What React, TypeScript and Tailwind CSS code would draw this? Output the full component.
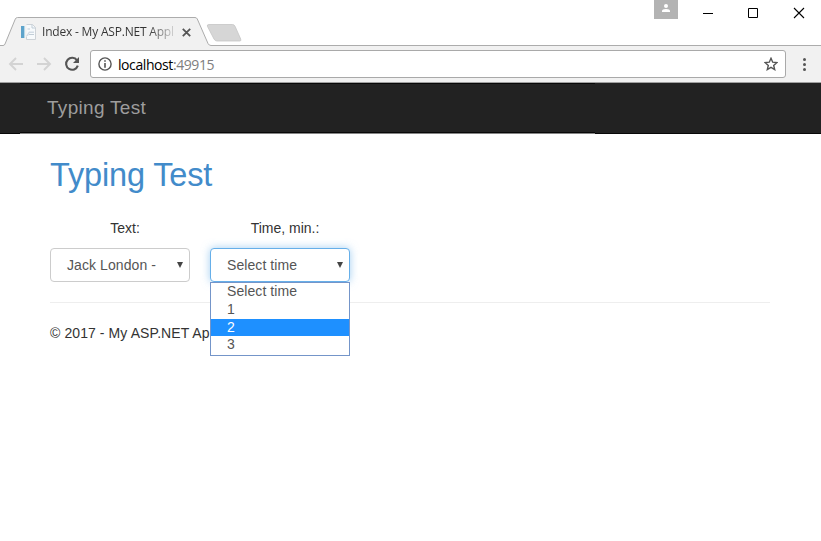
import type { ReactNode } from 'react';

function TitleBar() {
  return (
    <header className="relative flex h-[46px] items-start bg-white">
      <svg className="absolute inset-0" width="821" height="46" fill="none">
        <path d="M0 45.5H3Q4.5 45.5 5 44L15.3 19Q16 17.5 17.5 17.5H195Q196.6 17.5 197.3 19L208 43.5Q209 45.5 211 45.5H821V46H0Z" fill="#f1f1f1" />
        <path d="M0 45.5H3Q4.5 45.5 5 44L15.3 19Q16 17.5 17.5 17.5H195Q196.6 17.5 197.3 19L208 43.5Q209 45.5 211 45.5H821" stroke="#acacac" />
        <path d="M209 24.5H232.5Q234.2 24.5 235 26.2L240.7 39Q241.5 41 239.8 41H217Q215 41 214 39L207.4 26.3Q206.8 24.5 209 24.5Z" fill="#d6d6d6" stroke="#c5c5c5" strokeWidth=".8" />
      </svg>
      <div className="relative mt-[18px] ml-[21px] flex h-7 w-[173px] items-center">
        <svg width="16" height="16" viewBox="0 0 16 16" fill="none">
          <path d="M0 2H3V14H0Z" fill="#5da3cb" />
          <path d="M3 2H4V14H3Z" fill="#b7d8e8" />
          <path d="M5.5 .5H11.5L14.5 3.5V15.5H5.5V12.5" fill="#f7fafc" stroke="#cdd2d7" />
          <path d="M11 .5V4H14.5M6.5 5H9M8 10.5H13" stroke="#c1cdd7" />
          <path d="M5 12L8 7.5H13V9H8.5L7 12Z" fill="#d3dce5" />
        </svg>
        <div className="ml-[5px] w-[133px] bg-linear-to-r from-[#333] from-80% to-[#33333322] bg-clip-text font-['Open_Sans',sans-serif] text-[12px] tracking-[-0.2px] whitespace-nowrap text-transparent">
          Index - My ASP.NET Appl
        </div>
        <svg className="ml-[7px]" width="9" height="9" viewBox="0 0 9 9">
          <path d="M.8 .8L8.2 8.2M8.2 .8L.8 8.2" stroke="#555" strokeWidth="1.8" />
        </svg>
      </div>
      <div className="relative ml-auto flex h-[27px] w-[167px]">
        <div className="flex h-[19px] w-6 justify-center bg-[#b3b3b3]">
          <svg width="10" height="13" viewBox="0 0 10 13" fill="#fff">
            <circle cx="5" cy="6" r="2" />
            <path d="M1 12V11Q1 9 5 9T9 11V12Z" />
          </svg>
        </div>
        <svg width="143" height="27" fill="none" stroke="#000">
          <path d="M25 13.5H35M70.5 8.5H79.5V17.5H70.5Z" />
          <path d="M116 8L126 18M126 8L116 18" strokeWidth="1.1" />
        </svg>
      </div>
    </header>
  );
}

function Toolbar() {
  return (
    <div className="flex h-9 items-center bg-[#f1f1f1]">
      <svg className="shrink-0" width="90" height="36" fill="none">
        <path d="M23 18H10M16 12L10 18L16 24M37 18H50M44 12L50 18L44 24" stroke="#d3d3d3" strokeWidth="1.9" />
        <path d="M77 14.3A6 6 0 1 0 77.8 19.7" stroke="#555" strokeWidth="2.1" />
        <path d="M79 11V17H73Z" fill="#555" />
      </svg>
      <div className="flex h-7 w-[696px] shrink-0 items-center rounded-[3px] border border-[#a9a9a9] bg-white pr-[7px] pl-[7px]">
        <svg width="14" height="14" viewBox="0 0 14 14" fill="none" stroke="#555">
          <circle cx="7" cy="7" r="6.1" strokeWidth="1.4" />
          <path d="M7 6V10.7M7 3.2V4.8" strokeWidth="1.6" />
        </svg>
        <div className="ml-[6px] font-['Open_Sans',sans-serif] text-[14px] tracking-[-0.42px] text-black">
          localhost<span className="text-[#808080]">:49915</span>
        </div>
        <svg className="ml-auto" width="14" height="14" viewBox="0 0 14 14" fill="none">
          <path d="M7 1.3L8.7 5.2L12.9 5.6L9.7 8.4L10.7 12.6L7 10.4L3.3 12.6L4.3 8.4L1.1 5.6L5.3 5.2Z" stroke="#555" strokeWidth="1.4" />
        </svg>
      </div>
      <svg width="35" height="36" fill="#555">
        <circle cx="18.5" cy="13.5" r="1.5" />
        <circle cx="18.5" cy="18.5" r="1.5" />
        <circle cx="18.5" cy="23.5" r="1.5" />
      </svg>
    </div>
  );
}

function Field({ label, value, focused, children }: { label: string; value: string; focused?: boolean; children?: ReactNode }) {
  return (
    <div className="relative w-[140px]">
      <div className="h-5 pl-[10px] text-center leading-5">{label}</div>
      <div
        className={`mt-[10px] flex h-[34px] items-center justify-between rounded-[4px] border bg-white pr-[6px] pl-4 tracking-[0.08px] text-[#555] ${
          focused ? 'border-[#66afe9] shadow-[0_0_8px_rgba(102,175,233,0.6)]' : 'border-[#ccc]'
        }`}
      >
        <span>{value}</span>
        <svg width="6" height="6" viewBox="0 0 6 6" fill="#444">
          <path d="M0 0H6L3 6Z" />
        </svg>
      </div>
      {children}
    </div>
  );
}

const options = ['Select time', '1', '2', '3'];

export default function App() {
  return (
    <div className="h-[541px] w-[821px] overflow-hidden bg-white font-['Liberation_Sans',Arial,sans-serif] text-[14px] text-[#333]">
      <TitleBar />
      <Toolbar />
      <nav className="flex h-[52px] flex-col border-t border-[#a0a0a0] bg-[#222] text-[#9d9d9d]">
        <div className="ml-5 h-px w-[575px] bg-[#080808]" />
        <div className="h-12 pl-[47px] text-[19px] leading-[48px] tracking-[0.3px]">Typing Test</div>
        <div className="ml-5 h-px w-[575px] bg-[#080808]" />
        <div className="h-px bg-[#080808]">
          <div className="ml-5 h-px w-[575px] bg-[#858585]" />
        </div>
      </nav>
      <main className="w-[770px] pl-[50px]">
        <h1 className="pt-[22px] text-[32.5px] leading-[38px] tracking-[-0.15px] text-[#428bca]">Typing Test</h1>
        <div className="flex gap-5 pt-6">
          <Field label="Text:" value="Jack London -" />
          <Field label="Time, min.:" value="Select time" focused>
            <ul className="absolute top-16 left-0 h-[74px] w-[140px] border border-[#7495c9] bg-white tracking-[0.08px] text-[#555]">
              {options.map((option) => (
                <li
                  key={option}
                  className={`pl-4 ${option === '2' ? 'h-[17px] bg-[#1e90ff] leading-[17px] text-white' : 'h-[18px] leading-4'}`}
                >
                  {option}
                </li>
              ))}
            </ul>
          </Field>
        </div>
        <hr className="mt-5 border-[#eee]" />
        <footer className="pt-5 leading-5 tracking-[0.09px]">© 2017 - My ASP.NET Ap</footer>
      </main>
    </div>
  );
}
